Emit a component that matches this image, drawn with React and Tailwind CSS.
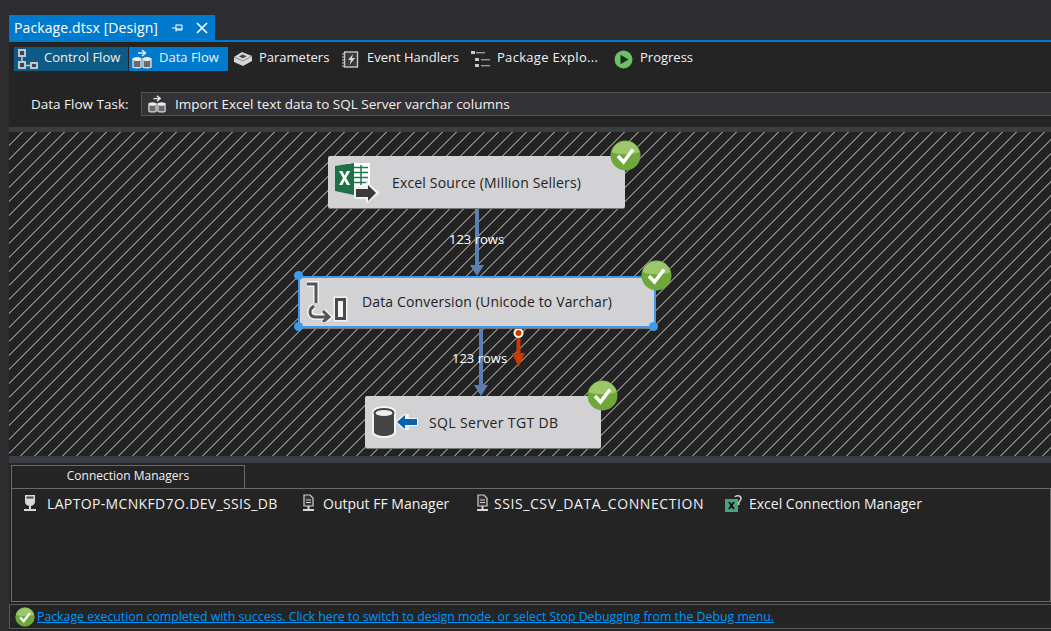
import React from 'react'

function FlowIcon() {
  return (
    <svg width="22" height="21" viewBox="0 0 22 21" fill="none" stroke="#c4c4c4" strokeWidth="2">
      <rect x="2" y="1" width="6" height="6" fill="#2f4a5c" />
      <rect x="2" y="13" width="6" height="6" fill="#2f4a5c" />
      <rect x="14" y="14" width="6" height="5" fill="#2f4a5c" />
      <path d="M5 7v6M8 16.5h6" strokeWidth="1.6" />
    </svg>
  )
}

function DataFlowIcon({ size = 20 }) {
  return (
    <svg width={size} height={size} viewBox="0 0 20 20">
      <path d="M6 4h7M10 1l3.5 3-3.5 3" fill="none" stroke="#e8e8e8" strokeWidth="1.6" />
      <path d="M1 10h8v8c0 1-8 1-8 0zM11 10h8v8c0 1-8 1-8 0z" fill="#6a6a6a" stroke="#dcdcdc" strokeWidth="1.4" />
      <ellipse cx="5" cy="10" rx="4" ry="2" fill="#ececec" />
      <ellipse cx="15" cy="10" rx="4" ry="2" fill="#ececec" />
    </svg>
  )
}

function ParamsIcon() {
  return (
    <svg width="20" height="16" viewBox="0 0 20 16">
      <path d="M1 6l8-5 10 4v5l-9 5-9-4z" fill="#d6d6d6" />
      <path d="M1 6l9 4 9-5" fill="none" stroke="#8a8a8a" />
      <path d="M6 5.5l3.5-2 4 1.7-3.5 2z" fill="#444" />
    </svg>
  )
}

function EventIcon() {
  return (
    <svg width="17" height="17" viewBox="0 0 17 17">
      <rect x="2.5" y="1" width="13" height="15" fill="#3a3a3a" stroke="#c8c8c8" strokeWidth="1.4" />
      <path d="M0 3h2M0 6h2M0 9h2M0 12h2M0 15h2" stroke="#c8c8c8" />
      <path d="M11 3L6 9h3l-1.5 5L13 7h-3z" fill="#d8d8d8" />
    </svg>
  )
}

function ExplorerIcon() {
  return (
    <svg width="19" height="18" viewBox="0 0 19 18" fill="#c8c8c8">
      <rect x="0" y="1" width="4" height="3" />
      <rect x="5" y="2" width="9" height="1.4" fill="#999" />
      <rect x="4" y="8" width="4" height="3" />
      <rect x="10" y="9" width="9" height="1.4" fill="#999" />
      <rect x="4" y="14" width="4" height="3" />
      <rect x="10" y="15" width="9" height="1.4" fill="#999" />
    </svg>
  )
}

function PlayIcon() {
  return (
    <svg width="19" height="19" viewBox="0 0 19 19">
      <circle cx="9.5" cy="9.5" r="9" fill="#6cc068" />
      <path d="M6.5 4.8l8 4.7-8 4.7z" fill="#1c2a1c" />
    </svg>
  )
}

function CheckBadge({ size = 31 }) {
  return (
    <svg width={size} height={size} viewBox="0 0 31 31">
      <circle cx="15.5" cy="15.5" r="15" fill="#6fa83a" />
      <path d="M15.5 1a14.5 14.5 0 0 1 14 11c-6 3-22 3-28 0a14.5 14.5 0 0 1 14-11z" fill="#9cc76a" />
      <path d="M8 16l5.5 6L23 9.5" fill="none" stroke="#fff" strokeWidth="3.5" />
    </svg>
  )
}

function ExcelIcon() {
  return (
    <svg width="46" height="44" viewBox="0 0 46 44">
      <rect x="14" y="3" width="22" height="26" fill="#fff" />
      <path d="M20 7.5h14M20 12.5h14M20 17.5h14M20 22.5h14M27 5v20" stroke="#1d7a4a" strokeWidth="1.5" />
      <path d="M1 6l19-3v32L1 31z" fill="#1e7145" />
      <path d="M5 11l4 7-4 7h3.4l2.2-4.4 2.2 4.4h3.4l-4-7 4-7h-3.4l-2.2 4.4L8.4 11z" fill="#fff" />
      <path d="M20 26h12v-5l14 12-14 11v-5H20z" fill="#f0f0f0" />
      <path d="M22 29h12v-4l8 8-8 8v-4H22z" fill="#3a3a3a" />
    </svg>
  )
}

function ConvertIcon() {
  return (
    <svg width="42" height="42" viewBox="0 0 42 42" fill="none">
      <path d="M1 4h9v19" stroke="#f4f4f4" strokeWidth="6" />
      <path d="M1 4h9v19" stroke="#555" strokeWidth="3" />
      <path d="M8 26c-6 4-5 11 2 11h12M17 31l6 6-6 6" stroke="#f4f4f4" strokeWidth="6" />
      <path d="M8 26c-6 4-5 11 2 11h12M17 31l6 6-6 5" stroke="#555" strokeWidth="3" />
      <rect x="29" y="18" width="11" height="22" fill="#f4f4f4" stroke="#f4f4f4" strokeWidth="3" />
      <rect x="30.5" y="19.5" width="8" height="19" stroke="#4a4a4a" strokeWidth="3" />
    </svg>
  )
}

function DestIcon() {
  return (
    <svg width="46" height="32" viewBox="0 0 46 32">
      <path d="M0 6c0-4 7-6 12-6s12 2 12 6v20c0 4-7 6-12 6S0 30 0 26z" fill="#f4f4f4" />
      <path d="M2 7v19c0 2 5 4 10 4s10-2 10-4V7z" fill="#444" />
      <ellipse cx="12" cy="7" rx="9.5" ry="4" fill="#eee" stroke="#444" strokeWidth="2" />
      <path d="M23 16l9-8h5v4h9v8h-9v4h-5z" fill="#f4f4f4" />
      <path d="M25 16l8-7v4h12v6H33v4z" fill="#0a61ae" />
    </svg>
  )
}

function ServerIcon() {
  return (
    <svg width="14" height="18" viewBox="0 0 14 18">
      <path d="M2 1h10v7c0 2-2 4-5 4S2 10 2 8z" fill="#d8d8d8" />
      <rect x="3.5" y="2.5" width="7" height="2" fill="#444" />
      <path d="M6 12h2v3h5v2H1v-2h5z" fill="#d8d8d8" />
    </svg>
  )
}

function FileConnIcon() {
  return (
    <svg width="14" height="18" viewBox="0 0 14 18">
      <path d="M3 1h6l3 3v8H3z" fill="#333" stroke="#d0d0d0" strokeWidth="1.2" />
      <path d="M5 6h5M5 8.5h5" stroke="#d0d0d0" />
      <path d="M6.5 12h2v3H13v2H2v-2h4.5z" fill="#d8d8d8" />
    </svg>
  )
}

function ExcelConnIcon() {
  return (
    <svg width="18" height="19" viewBox="0 0 18 19">
      <rect x="0" y="5" width="13" height="13" fill="#4aa37a" />
      <path d="M4 8l5 7M9 8l-5 7" stroke="#111" strokeWidth="1.8" />
      <path d="M10 3c1-2 6-2 6 1.5S12 7 14 11" fill="none" stroke="#cfcfcf" strokeWidth="1.5" />
    </svg>
  )
}

function ToolButton({ icon, label, className, labelClass = '' }) {
  return (
    <div className={`flex items-center h-6 whitespace-nowrap ${className}`}>
      {icon}
      <span className={`text-[13px] mb-[3px] ${labelClass}`}>{label}</span>
    </div>
  )
}

function Node({ className, textClass, icon, label, badgeClass }) {
  return (
    <div className={`absolute h-[52px] bg-[#d2d2d5] rounded-[2px] text-[#222] text-[14px] shadow-[0_1px_0_#777] ${className}`}>
      <div className="absolute left-0 top-0">{icon}</div>
      <span className={`absolute leading-5 whitespace-nowrap ${textClass}`}>{label}</span>
      <div className={`absolute ${badgeClass}`}><CheckBadge /></div>
    </div>
  )
}

function Handle({ className }) {
  return <div className={`absolute w-[9px] h-[9px] rounded-full bg-[#3d9be9] ${className}`} />
}

function Arrow({ className, height }) {
  return (
    <svg className={`absolute ${className}`} width="14" height={height} viewBox={`0 0 14 ${height}`}>
      <path d={`M5 0h4v${height - 11}h5L7 ${height} 0 ${height - 11}h5z`} fill="#5b7fb0" />
    </svg>
  )
}

function Conn({ icon, label, className, labelClass = '' }) {
  return (
    <div className={`flex items-center ${className}`}>
      {icon}
      <span className={labelClass}>{label}</span>
    </div>
  )
}

export default function App() {
  return (
    <div className="w-[1051px] h-[631px] overflow-hidden bg-[#2d2d30] text-[#f1f1f1] text-[14px] flex flex-col font-['Open_Sans','Noto_Sans',sans-serif]">
      <div className="h-[15px] shrink-0" />

      {/* document tab */}
      <div className="h-[25px] shrink-0 pl-[9px]">
        <div className="w-[206px] h-[25px] bg-[#007acc] flex items-center pl-[5px] text-white">
          <span className="w-[158px] tracking-[0.1px]">Package.dtsx [Design]</span>
          <svg width="12" height="10" viewBox="0 0 12 10" fill="none" stroke="#fff">
            <path d="M0 5h4M4 1.5v7M4 2h6v5H4M4 6h6" />
          </svg>
          <svg className="ml-[12px]" width="12" height="12" viewBox="0 0 12 12" stroke="#fff" strokeWidth="1.6">
            <path d="M1 1l10 10M11 1L1 11" />
          </svg>
        </div>
      </div>

      <div className="ml-[9px] flex-1 flex flex-col border-t-2 border-[#007acc] bg-[#242424]">
        {/* designer tabs */}
        <div className="h-[29px] pt-[5px] pl-[5px] flex shrink-0">
          <ToolButton
            className="w-[114px] bg-[#0e5a87]"
            icon={<span className="ml-[3px] mr-[5px] flex"><FlowIcon /></span>}
            label="Control Flow"
          />
          <ToolButton
            className="w-[99px] ml-px bg-[#007acc]"
            icon={<span className="ml-[3px] mr-[7px] flex"><DataFlowIcon /></span>}
            label="Data Flow"
          />
          <ToolButton
            className="ml-[5px] w-[109px]"
            icon={<span className="mr-[6px] flex"><ParamsIcon /></span>}
            label="Parameters"
          />
          <ToolButton
            className="w-[129px]"
            icon={<span className="mr-[8px] flex"><EventIcon /></span>}
            label="Event Handlers"
          />
          <ToolButton
            className="w-[143px]"
            icon={<span className="mr-[7px] flex"><ExplorerIcon /></span>}
            label="Package Explo..."
            labelClass="tracking-[0.3px]"
          />
          <ToolButton
            icon={<span className="mr-[7px] flex"><PlayIcon /></span>}
            label="Progress"
          />
        </div>

        {/* task selector */}
        <div className="h-[56px] pt-[21px] flex shrink-0 text-[13.5px]">
          <span className="ml-[22px] w-[110px] h-6 leading-6">Data Flow Task:</span>
          <div className="flex-1 h-6 flex items-center bg-[#333337] border border-[#555] border-r-0">
            <span className="ml-[6px] mr-[9px] flex"><DataFlowIcon size={18} /></span>
            <span>Import Excel text data to SQL Server varchar columns</span>
          </div>
        </div>

        <div className="h-[5px] bg-[#3a3d41] shrink-0" />

        {/* design surface */}
        <div className="relative h-[324px] shrink-0 overflow-hidden bg-[repeating-linear-gradient(135deg,#232323_0px,#232323_8.9px,#7c7c7c_8.9px,#7c7c7c_9.9px)]">
          <Arrow className="left-[461px] top-[76px]" height={68} />
          <span className="absolute left-[440px] top-[97px] text-[13px] leading-5 text-white">123 rows</span>
          <Node
            className="left-[319px] top-[24px] w-[297px]"
            textClass="left-[64px] top-[17px] tracking-[0.17px]"
            icon={<span className="flex ml-[6px] mt-[4px]"><ExcelIcon /></span>}
            label="Excel Source (Million Sellers)"
            badgeClass="left-[282px] top-[-16px]"
          />

          <Arrow className="left-[465px] top-[195px]" height={69} />
          <svg className="absolute left-[503px] top-[196px]" width="14" height="41" viewBox="0 0 14 41">
            <circle cx="6.5" cy="5" r="5" fill="#fff" />
            <circle cx="6.5" cy="5" r="3" fill="#c73a00" />
            <path d="M4.5 10h4v15H13L6.5 39 0 25h4.5z" fill="#c73a00" />
          </svg>
          <span className="absolute left-[443px] top-[216px] text-[13px] leading-5 text-white">123 rows</span>
          <Node
            className="left-[289px] top-[144px] w-[358px] border-2 border-[#3d9be9] rounded-none"
            textClass="left-[62px] top-[14px] tracking-[0.14px]"
            icon={<span className="flex ml-[6px] mt-[2px]"><ConvertIcon /></span>}
            label="Data Conversion (Unicode to Varchar)"
            badgeClass="left-[341px] top-[-18px]"
          />
          <Handle className="left-[285px] top-[139px]" />
          <Handle className="left-[285px] top-[190px]" />
          <Handle className="left-[640px] top-[190px]" />

          <Node
            className="left-[356px] top-[264px] w-[236px]"
            textClass="left-[64px] top-[17px] tracking-[0.35px]"
            icon={<span className="flex ml-[7px] mt-[10px]"><DestIcon /></span>}
            label="SQL Server TGT DB"
            badgeClass="left-[222px] top-[-16px]"
          />
        </div>

        <div className="h-[7px] bg-[#3a3d41] shrink-0" />

        {/* connection managers */}
        <div className="h-[139px] shrink-0 pt-[2px] pl-[2px] flex flex-col">
          <div className="w-[234px] h-[23px] border border-b-0 border-[#6a6a6a] text-center text-[12px] leading-[20px]">Connection Managers</div>
          <div className="flex-1 border border-[#6a6a6a] flex items-start pt-[4px] text-[14px]">
            <Conn className="ml-[11px] w-[278px] h-5 gap-[10px]" icon={<ServerIcon />} label="LAPTOP-MCNKFD7O.DEV_SSIS_DB" labelClass="tracking-[0.35px]" />
            <Conn className="w-[174px] h-5 gap-[8px]" icon={<FileConnIcon />} label="Output FF Manager" />
            <Conn className="w-[250px] h-5 gap-[5px]" icon={<FileConnIcon />} label="SSIS_CSV_DATA_CONNECTION" labelClass="tracking-[0.58px]" />
            <Conn className="h-5 gap-[6px]" icon={<ExcelConnIcon />} label="Excel Connection Manager" />
          </div>
        </div>

        {/* status bar */}
        <div className="h-[25px] mt-[2px] shrink-0 border border-[#5a5a5a] border-r-0 flex items-center pl-[5px]">
          <CheckBadge size={20} />
          <a className="ml-[2px] mt-[2px] text-[12.3px] text-[#0097fb] underline whitespace-nowrap">Package execution completed with success. Click here to switch to design mode, or select Stop Debugging from the Debug menu.</a>
        </div>
      </div>
    </div>
  )
}
